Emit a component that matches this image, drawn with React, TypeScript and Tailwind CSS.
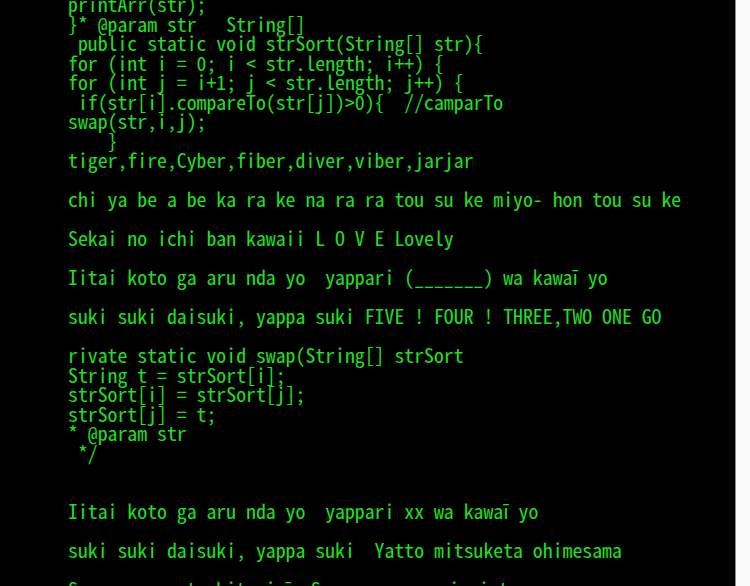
import React from "react";

const lines: string[] = [
  "printArr(str);",
  "}* @param str   String[]",
  " public static void strSort(String[] str){",
  "for (int i = 0; i < str.length; i++) {",
  "for (int j = i+1; j < str.length; j++) {",
  " if(str[i].compareTo(str[j])>0){  //camparTo",
  "swap(str,i,j);",
  "    }",
  "tiger,fire,Cyber,fiber,diver,viber,jarjar",
  "",
  "chi ya be a be ka ra ke na ra ra tou su ke miyo- hon tou su ke",
  "",
  "Sekai no ichi ban kawaii L O V E Lovely",
  "",
  "Iitai koto ga aru nda yo  yappari (_______) wa kawaī yo",
  "",
  "suki suki daisuki, yappa suki FIVE ! FOUR ! THREE,TWO ONE GO",
  "",
  "rivate static void swap(String[] strSort",
  "String t = strSort[i];",
  "strSort[i] = strSort[j];",
  "strSort[j] = t;",
  "* @param str",
  " */",
  "",
  "",
  "Iitai koto ga aru nda yo  yappari xx wa kawaī yo",
  "",
  "suki suki daisuki, yappa suki  Yatto mitsuketa ohimesama",
  "",
  "Sore wa mou to hitori ī  Sore no onna ni ai to",
];

export default function App() {
  return (
    <div className="flex h-[586px] w-[750px] overflow-hidden">
      <div className="w-[735px] shrink-0 overflow-hidden bg-black pl-[68px]">
        <div className="-mt-[6px] font-['Noto_Sans_Mono_CJK_SC','Liberation_Mono',monospace] text-[19.8px] leading-[19.5px] text-[#1fe01f]">
          {lines.map((l, i) => (
            <div key={i} className="h-[19.5px] whitespace-pre">
              {l}
            </div>
          ))}
        </div>
      </div>
      <div className="w-px shrink-0 bg-[#8a8a8a]" />
      <div className="flex-1 bg-[#fafafa]" />
    </div>
  );
}
